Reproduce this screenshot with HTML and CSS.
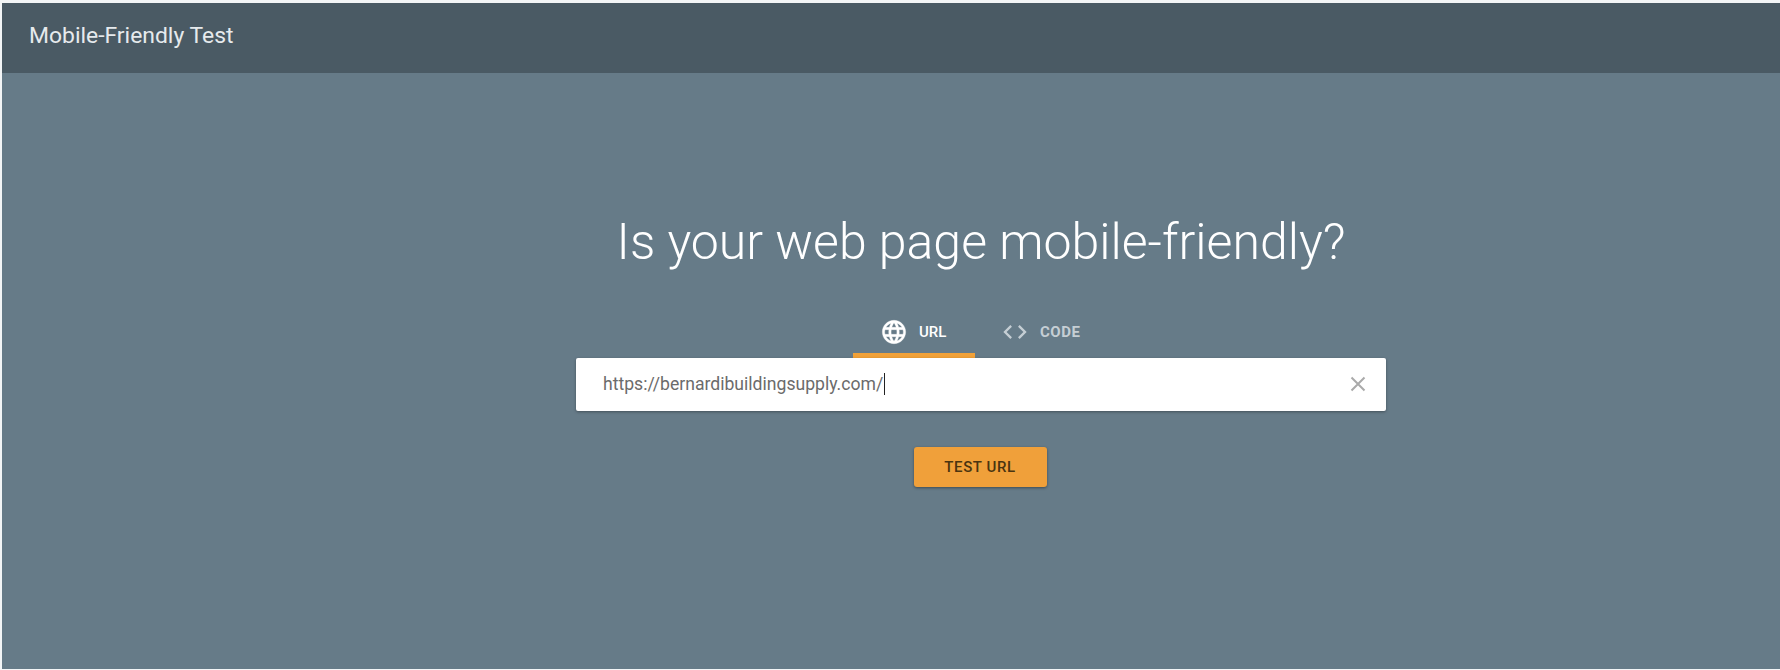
FILE: index.html
```html
<!DOCTYPE html>
<html lang="en">
<head>
  <meta charset="UTF-8">
  <title>Mobile-Friendly Test</title>
  <link rel="stylesheet" href="styles.css">
</head>
<body>

<div class="page">
  <header class="top-bar">Mobile-Friendly Test</header>

  <main class="hero">
    <h1>Is your web page mobile-friendly?</h1>

    <div class="tabs">
      <div class="tab active">
        <svg class="tab-icon" width="28" height="28" viewBox="0 0 24 24" fill="currentColor"><path d="M11.99 2C6.47 2 2 6.48 2 12s4.47 10 9.99 10C17.52 22 22 17.52 22 12S17.52 2 11.99 2zm6.93 6h-2.95c-.32-1.25-.78-2.45-1.38-3.56 1.84.63 3.37 1.91 4.33 3.56zM12 4.04c.83 1.2 1.48 2.53 1.91 3.96h-3.82c.43-1.43 1.08-2.76 1.91-3.96zM4.26 14C4.1 13.36 4 12.69 4 12s.1-1.36.26-2h3.38c-.08.66-.14 1.32-.14 2s.06 1.34.14 2H4.26zm.82 2h2.95c.32 1.25.78 2.45 1.38 3.56-1.84-.63-3.37-1.9-4.33-3.56zm2.95-8H5.08c.96-1.66 2.49-2.93 4.33-3.56C8.81 5.55 8.35 6.75 8.03 8zM12 19.96c-.83-1.2-1.48-2.53-1.91-3.96h3.82c-.43 1.43-1.08 2.76-1.91 3.96zM14.34 14H9.66c-.09-.66-.16-1.32-.16-2s.07-1.35.16-2h4.68c.09.65.16 1.32.16 2s-.07 1.34-.16 2zm.25 5.56c.6-1.11 1.06-2.31 1.38-3.56h2.95c-.96 1.65-2.49 2.93-4.33 3.56zM16.36 14c.08-.66.14-1.32.14-2s-.06-1.34-.14-2h3.38c.16.64.26 1.31.26 2s-.1 1.36-.26 2h-3.38z" stroke="currentColor" stroke-width="0.3"/></svg>
        <span>URL</span>
      </div>
      <div class="tab">
        <svg class="tab-icon" width="28" height="28" viewBox="0 0 24 24" fill="currentColor"><path d="M9.4 16.6L4.8 12l4.6-4.6L8 6l-6 6 6 6 1.4-1.4zm5.2 0l4.6-4.6-4.6-4.6L16 6l6 6-6 6-1.4-1.4z"/></svg>
        <span>CODE</span>
      </div>
    </div>

    <div class="url-box">
      <div class="url-text">https://bernardibuildingsupply.com/<span class="caret"></span></div>
      <svg class="clear-icon" width="24" height="24" viewBox="0 0 24 24"><path d="M5.5 5.5l13 13M18.5 5.5l-13 13" stroke="#aaa" stroke-width="2" fill="none"/></svg>
    </div>

    <button class="test-btn">TEST URL</button>
  </main>
</div>

</body>
</html>
```

FILE: styles.css
```css
html, body {
  margin: 0;
  height: 100%;
}
body {
  background: #f3f5f6;
  font-family: Roboto, sans-serif;
}
.page {
  height: 669px;
  padding: 3px 0 0 2px;
  box-sizing: border-box;
  display: flex;
  flex-direction: column;
}
.top-bar {
  height: 70px;
  flex-shrink: 0;
  background: #4a5a64;
  color: #e6eaed;
  font-size: 22.9px;
  line-height: 66px;
  padding-left: 27px;
  box-sizing: border-box;
}
.hero {
  flex: 1;
  background: #667b88;
  display: flex;
  flex-direction: column;
  align-items: center;
  padding-left: 180px;
}
h1 {
  margin: 134px 0 0;
  font-size: 50px;
  font-weight: 300;
  line-height: 70px;
  color: #fff;
}
.tabs {
  display: flex;
  margin-top: 36px;
  height: 45px;
  width: 810px;
  padding-left: 277px;
  box-sizing: border-box;
}
.tab {
  width: 122px;
  box-sizing: border-box;
  display: flex;
  align-items: center;
  gap: 11px;
  padding: 0 0 2px 27px;
  font-size: 15px;
  font-weight: 500;
  color: #c5ced4;
  border-bottom: 5px solid transparent;
}
.tab + .tab {
  font-weight: 700;
  letter-spacing: 0.5px;
  padding-left: 26px;
}
.tab.active {
  color: #fff;
  border-bottom-color: #f1a138;
}
.tab-icon {
  flex-shrink: 0;
}
.url-box {
  width: 810px;
  height: 53px;
  background: #fff;
  border-radius: 2px;
  box-shadow: 0 1px 3px rgba(0,0,0,0.35);
  display: flex;
  align-items: center;
  justify-content: space-between;
  padding: 0 16px 2px 27px;
  box-sizing: border-box;
}
.url-text {
  font-size: 17.6px;
  color: #6b6b6b;
  display: flex;
  align-items: center;
}
.caret {
  display: inline-block;
  width: 1px;
  height: 22px;
  background: #222;
  margin-left: 1px;
}
.test-btn {
  margin-top: 36px;
  margin-right: 2px;
  width: 133px;
  height: 40px;
  border: none;
  border-radius: 3px;
  background: #f0a03a;
  color: #4a3410;
  font-family: Roboto, sans-serif;
  font-size: 15px;
  font-weight: 500;
  letter-spacing: 0.6px;
  box-shadow: 0 1px 3px rgba(0,0,0,0.4);
}
```
